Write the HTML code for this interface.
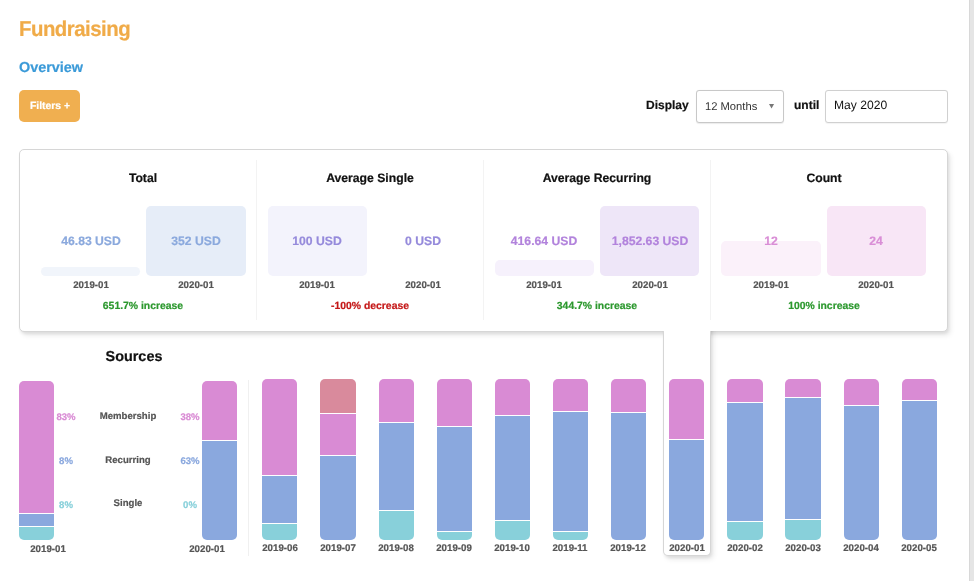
<!DOCTYPE html>
<html><head><meta charset="utf-8"><style>
html,body{margin:0;padding:0;background:#fff;width:974px;height:581px;overflow:hidden;position:relative;}
.t{will-change:transform;text-rendering:geometricPrecision;}
.t{position:absolute;white-space:nowrap;font-family:"Liberation Sans", sans-serif;}
.b{-webkit-text-stroke:0.2px currentColor;}
</style></head><body>
<div id="t0" class="t b" style="left:18.60px;top:20.13px;font-size:20.4px;line-height:20.4px;font-weight:bold;color:#F0AB48;letter-spacing:-0.5px;transform:scaleY(1.055);transform-origin:0 17.8px;">Fundraising</div>
<div id="t1" class="t b" style="left:18.70px;top:61.21px;font-size:14.4px;line-height:14.4px;font-weight:bold;color:#3B9AD8;">Overview</div>
<div style="position:absolute;left:19px;top:90px;width:61px;height:32px;background:#F0AF50;border-radius:5px;"></div>
<div id="t2" class="t b" style="left:-150.50px;width:400px;text-align:center;top:101.80px;font-size:10.4px;line-height:10.4px;font-weight:bold;color:#fff;">Filters +</div>
<div id="t3" class="t b" style="left:646.40px;top:98.94px;font-size:12px;line-height:12px;font-weight:bold;color:#111;">Display</div>
<div style="position:absolute;left:696px;top:90px;width:88px;height:32.6px;box-sizing:border-box;border:1px solid #c8c8c8;border-radius:3px;background:#fff;box-shadow:0 0.5px 1px rgba(0,0,0,0.08);"></div>
<div id="t4" class="t" style="left:704.60px;top:102.02px;font-size:11.2px;line-height:11.2px;font-weight:normal;color:#333;">12 Months</div>
<svg style="position:absolute;left:768px;top:103px" width="8" height="7"><path d="M1 1 L6.1 1 L3.55 5.6 Z" fill="#777"/></svg>
<div id="t5" class="t b" style="left:793.80px;top:98.84px;font-size:12px;line-height:12px;font-weight:bold;color:#111;">until</div>
<div style="position:absolute;left:825px;top:90px;width:123px;height:32.6px;box-sizing:border-box;border:1px solid #d0d0d0;border-radius:3px;background:#fff;box-shadow:0 0.5px 1px rgba(0,0,0,0.05);"></div>
<div id="t6" class="t" style="left:834.20px;top:99.16px;font-size:12.1px;line-height:12.1px;font-weight:normal;color:#111;">May 2020</div>
<div style="position:absolute;left:969px;top:0px;width:5px;height:581px;background:#e5e5e5;border-left:1.5px solid #d8d8d8;box-sizing:border-box;"></div>
<div style="position:absolute;left:19px;top:148.6px;width:929px;height:183.2px;box-sizing:border-box;border:1px solid #d6d6d6;border-radius:5px;background:#fff;box-shadow:1px 2px 3px rgba(0,0,0,0.08), 3px 4px 5px rgba(0,0,0,0.07);"></div>
<div style="position:absolute;left:663px;top:320px;width:48px;height:236.4px;box-sizing:border-box;border:1px solid #d6d6d6;border-top:none;border-radius:0 0 5px 5px;background:#fff;box-shadow:1px 2px 3px rgba(0,0,0,0.08), 3px 4px 5px rgba(0,0,0,0.07);clip-path:inset(11px -20px -20px -20px);"></div>
<div style="position:absolute;left:664px;top:325px;width:46px;height:8px;background:#fff;"></div>
<div id="t7" class="t b" style="left:-56.60px;width:400px;text-align:center;top:171.77px;font-size:12.2px;line-height:12.2px;font-weight:bold;color:#111;">Total</div>
<div style="position:absolute;left:41.0px;top:266.6872159090909px;width:99.4px;height:9.31278409090909px;background:#F1F5FB;border-radius:5px;"></div>
<div id="t8" class="t b" style="left:-109.30px;width:400px;text-align:center;top:234.87px;font-size:12.2px;line-height:12.2px;font-weight:bold;color:#8BA9DD;">46.83 USD</div>
<div id="t9" class="t b" style="left:-109.30px;width:400px;text-align:center;top:281.29px;font-size:9.7px;line-height:9.7px;font-weight:bold;color:#555;letter-spacing:0px;">2019-01</div>
<div style="position:absolute;left:146.4px;top:206.0px;width:99.4px;height:70.0px;background:#E6EDF8;border-radius:5px;"></div>
<div id="t10" class="t b" style="left:-3.90px;width:400px;text-align:center;top:234.87px;font-size:12.2px;line-height:12.2px;font-weight:bold;color:#8BA9DD;">352 USD</div>
<div id="t11" class="t b" style="left:-3.90px;width:400px;text-align:center;top:281.29px;font-size:9.7px;line-height:9.7px;font-weight:bold;color:#555;letter-spacing:0px;">2020-01</div>
<div id="t12" class="t b" style="left:-56.60px;width:400px;text-align:center;top:302.30px;font-size:10.4px;line-height:10.4px;font-weight:bold;color:#2C982E;">651.7% increase</div>
<div style="position:absolute;left:256px;top:160px;width:1px;height:160px;background:#f3f3f3;"></div>
<div id="t13" class="t b" style="left:170.15px;width:400px;text-align:center;top:171.77px;font-size:12.2px;line-height:12.2px;font-weight:bold;color:#111;">Average Single</div>
<div style="position:absolute;left:267.75px;top:206.0px;width:99.4px;height:70.0px;background:#F3F3FC;border-radius:5px;"></div>
<div id="t14" class="t b" style="left:117.45px;width:400px;text-align:center;top:234.87px;font-size:12.2px;line-height:12.2px;font-weight:bold;color:#958ADB;">100 USD</div>
<div id="t15" class="t b" style="left:117.45px;width:400px;text-align:center;top:281.29px;font-size:9.7px;line-height:9.7px;font-weight:bold;color:#555;letter-spacing:0px;">2019-01</div>
<div id="t16" class="t b" style="left:222.85px;width:400px;text-align:center;top:234.87px;font-size:12.2px;line-height:12.2px;font-weight:bold;color:#958ADB;">0 USD</div>
<div id="t17" class="t b" style="left:222.85px;width:400px;text-align:center;top:281.29px;font-size:9.7px;line-height:9.7px;font-weight:bold;color:#555;letter-spacing:0px;">2020-01</div>
<div id="t18" class="t b" style="left:170.15px;width:400px;text-align:center;top:302.30px;font-size:10.4px;line-height:10.4px;font-weight:bold;color:#C41818;">-100% decrease</div>
<div style="position:absolute;left:483px;top:160px;width:1px;height:160px;background:#f3f3f3;"></div>
<div id="t19" class="t b" style="left:396.90px;width:400px;text-align:center;top:171.77px;font-size:12.2px;line-height:12.2px;font-weight:bold;color:#111;">Average Recurring</div>
<div style="position:absolute;left:494.5px;top:260.2576229468377px;width:99.4px;height:15.74237705316226px;background:#F6F1FC;border-radius:5px;"></div>
<div id="t20" class="t b" style="left:344.20px;width:400px;text-align:center;top:234.87px;font-size:12.2px;line-height:12.2px;font-weight:bold;color:#B283DC;">416.64 USD</div>
<div id="t21" class="t b" style="left:344.20px;width:400px;text-align:center;top:281.29px;font-size:9.7px;line-height:9.7px;font-weight:bold;color:#555;letter-spacing:0px;">2019-01</div>
<div style="position:absolute;left:599.9px;top:206.0px;width:99.4px;height:70.0px;background:#EEE6F8;border-radius:5px;"></div>
<div id="t22" class="t b" style="left:449.60px;width:400px;text-align:center;top:234.87px;font-size:12.2px;line-height:12.2px;font-weight:bold;color:#B283DC;">1,852.63 USD</div>
<div id="t23" class="t b" style="left:449.60px;width:400px;text-align:center;top:281.29px;font-size:9.7px;line-height:9.7px;font-weight:bold;color:#555;letter-spacing:0px;">2020-01</div>
<div id="t24" class="t b" style="left:396.90px;width:400px;text-align:center;top:302.30px;font-size:10.4px;line-height:10.4px;font-weight:bold;color:#2C982E;">344.7% increase</div>
<div style="position:absolute;left:710px;top:160px;width:1px;height:160px;background:#f3f3f3;"></div>
<div id="t25" class="t b" style="left:623.65px;width:400px;text-align:center;top:171.77px;font-size:12.2px;line-height:12.2px;font-weight:bold;color:#111;">Count</div>
<div style="position:absolute;left:721.25px;top:241.0px;width:99.4px;height:35.0px;background:#FBF1FA;border-radius:5px;"></div>
<div id="t26" class="t b" style="left:570.95px;width:400px;text-align:center;top:234.87px;font-size:12.2px;line-height:12.2px;font-weight:bold;color:#D98ED6;">12</div>
<div id="t27" class="t b" style="left:570.95px;width:400px;text-align:center;top:281.29px;font-size:9.7px;line-height:9.7px;font-weight:bold;color:#555;letter-spacing:0px;">2019-01</div>
<div style="position:absolute;left:826.65px;top:206.0px;width:99.4px;height:70.0px;background:#F8E6F6;border-radius:5px;"></div>
<div id="t28" class="t b" style="left:676.35px;width:400px;text-align:center;top:234.87px;font-size:12.2px;line-height:12.2px;font-weight:bold;color:#D98ED6;">24</div>
<div id="t29" class="t b" style="left:676.35px;width:400px;text-align:center;top:281.29px;font-size:9.7px;line-height:9.7px;font-weight:bold;color:#555;letter-spacing:0px;">2020-01</div>
<div id="t30" class="t b" style="left:623.65px;width:400px;text-align:center;top:302.30px;font-size:10.4px;line-height:10.4px;font-weight:bold;color:#2C982E;">100% increase</div>
<div id="t31" class="t b" style="left:-66.30px;width:400px;text-align:center;top:349.61px;font-size:14.4px;line-height:14.4px;font-weight:bold;color:#111;">Sources</div>
<div style="position:absolute;left:18.9px;top:380.7px;width:35px;height:159.8px;border-radius:5px;overflow:hidden;display:flex;flex-direction:column;"><div style="height:133.17px;background:#D98BD4;box-sizing:border-box;flex:none;border-bottom:1px solid #fff;"></div><div style="height:13.32px;background:#8AA8DE;box-sizing:border-box;flex:none;border-bottom:1px solid #fff;"></div><div style="height:13.32px;background:#88D0DA;box-sizing:border-box;flex:none;"></div></div>
<div id="t32" class="t b" style="left:-151.60px;width:400px;text-align:center;top:545.29px;font-size:9.7px;line-height:9.7px;font-weight:bold;color:#555;letter-spacing:0px;">2019-01</div>
<div style="position:absolute;left:202px;top:380.7px;width:34.8px;height:159.8px;border-radius:5px;overflow:hidden;display:flex;flex-direction:column;"><div style="height:59.93px;background:#D98BD4;box-sizing:border-box;flex:none;border-bottom:1px solid #fff;"></div><div style="height:99.88px;background:#8AA8DE;box-sizing:border-box;flex:none;"></div></div>
<div id="t33" class="t b" style="left:7.20px;width:400px;text-align:center;top:545.29px;font-size:9.7px;line-height:9.7px;font-weight:bold;color:#555;letter-spacing:0px;">2020-01</div>
<div id="t34" class="t b" style="left:-72.00px;width:400px;text-align:center;top:411.97px;font-size:9.6px;line-height:9.6px;font-weight:bold;color:#555;">Membership</div>
<div id="t35" class="t b" style="left:-72.00px;width:400px;text-align:center;top:455.97px;font-size:9.6px;line-height:9.6px;font-weight:bold;color:#555;">Recurring</div>
<div id="t36" class="t b" style="left:-72.00px;width:400px;text-align:center;top:498.87px;font-size:9.6px;line-height:9.6px;font-weight:bold;color:#555;">Single</div>
<div id="t37" class="t b" style="left:-133.70px;width:400px;text-align:center;top:412.57px;font-size:9.6px;line-height:9.6px;font-weight:bold;color:#D98BD4;">83%</div>
<div id="t38" class="t b" style="left:-133.70px;width:400px;text-align:center;top:456.67px;font-size:9.6px;line-height:9.6px;font-weight:bold;color:#8AA8DE;">8%</div>
<div id="t39" class="t b" style="left:-133.70px;width:400px;text-align:center;top:500.57px;font-size:9.6px;line-height:9.6px;font-weight:bold;color:#88D0DA;">8%</div>
<div id="t40" class="t b" style="left:-10.30px;width:400px;text-align:center;top:412.57px;font-size:9.6px;line-height:9.6px;font-weight:bold;color:#D98BD4;">38%</div>
<div id="t41" class="t b" style="left:-10.30px;width:400px;text-align:center;top:456.77px;font-size:9.6px;line-height:9.6px;font-weight:bold;color:#8AA8DE;">63%</div>
<div id="t42" class="t b" style="left:-10.30px;width:400px;text-align:center;top:500.77px;font-size:9.6px;line-height:9.6px;font-weight:bold;color:#88D0DA;">0%</div>
<div style="position:absolute;left:247.5px;top:380px;width:1px;height:176px;background:#f0f0f0;"></div>
<div style="position:absolute;left:262.3px;top:379px;width:35.2px;height:160.70000000000005px;border-radius:5px;overflow:hidden;display:flex;flex-direction:column;"><div style="height:95.60px;background:#D98BD4;box-sizing:border-box;flex:none;"></div><div style="height:48.60px;background:#8AA8DE;box-sizing:border-box;flex:none;border-top:1px solid #fff;"></div><div style="height:16.50px;background:#88D0DA;box-sizing:border-box;flex:none;border-top:1px solid #fff;"></div></div>
<div id="t43" class="t b" style="left:79.60px;width:400px;text-align:center;top:544.49px;font-size:9.7px;line-height:9.7px;font-weight:bold;color:#555;letter-spacing:0px;">2019-06</div>
<div style="position:absolute;left:320.43px;top:379px;width:35.2px;height:160.70000000000005px;border-radius:5px;overflow:hidden;display:flex;flex-direction:column;"><div style="height:34.00px;background:#D98A9C;box-sizing:border-box;flex:none;"></div><div style="height:42.20px;background:#D98BD4;box-sizing:border-box;flex:none;border-top:1px solid #fff;"></div><div style="height:84.50px;background:#8AA8DE;box-sizing:border-box;flex:none;border-top:1px solid #fff;"></div></div>
<div id="t44" class="t b" style="left:137.73px;width:400px;text-align:center;top:544.49px;font-size:9.7px;line-height:9.7px;font-weight:bold;color:#555;letter-spacing:0px;">2019-07</div>
<div style="position:absolute;left:378.56px;top:379px;width:35.2px;height:160.70000000000005px;border-radius:5px;overflow:hidden;display:flex;flex-direction:column;"><div style="height:43.00px;background:#D98BD4;box-sizing:border-box;flex:none;"></div><div style="height:87.80px;background:#8AA8DE;box-sizing:border-box;flex:none;border-top:1px solid #fff;"></div><div style="height:29.90px;background:#88D0DA;box-sizing:border-box;flex:none;border-top:1px solid #fff;"></div></div>
<div id="t45" class="t b" style="left:195.86px;width:400px;text-align:center;top:544.49px;font-size:9.7px;line-height:9.7px;font-weight:bold;color:#555;letter-spacing:0px;">2019-08</div>
<div style="position:absolute;left:436.69px;top:379px;width:35.2px;height:160.70000000000005px;border-radius:5px;overflow:hidden;display:flex;flex-direction:column;"><div style="height:47.40px;background:#D98BD4;box-sizing:border-box;flex:none;"></div><div style="height:105.00px;background:#8AA8DE;box-sizing:border-box;flex:none;border-top:1px solid #fff;"></div><div style="height:8.30px;background:#88D0DA;box-sizing:border-box;flex:none;border-top:1px solid #fff;"></div></div>
<div id="t46" class="t b" style="left:253.99px;width:400px;text-align:center;top:544.49px;font-size:9.7px;line-height:9.7px;font-weight:bold;color:#555;letter-spacing:0px;">2019-09</div>
<div style="position:absolute;left:494.82px;top:379px;width:35.2px;height:160.70000000000005px;border-radius:5px;overflow:hidden;display:flex;flex-direction:column;"><div style="height:36.10px;background:#D98BD4;box-sizing:border-box;flex:none;"></div><div style="height:105.00px;background:#8AA8DE;box-sizing:border-box;flex:none;border-top:1px solid #fff;"></div><div style="height:19.60px;background:#88D0DA;box-sizing:border-box;flex:none;border-top:1px solid #fff;"></div></div>
<div id="t47" class="t b" style="left:312.12px;width:400px;text-align:center;top:544.49px;font-size:9.7px;line-height:9.7px;font-weight:bold;color:#555;letter-spacing:0px;">2019-10</div>
<div style="position:absolute;left:552.95px;top:379px;width:35.2px;height:160.70000000000005px;border-radius:5px;overflow:hidden;display:flex;flex-direction:column;"><div style="height:31.80px;background:#D98BD4;box-sizing:border-box;flex:none;"></div><div style="height:120.60px;background:#8AA8DE;box-sizing:border-box;flex:none;border-top:1px solid #fff;"></div><div style="height:8.30px;background:#88D0DA;box-sizing:border-box;flex:none;border-top:1px solid #fff;"></div></div>
<div id="t48" class="t b" style="left:370.25px;width:400px;text-align:center;top:544.49px;font-size:9.7px;line-height:9.7px;font-weight:bold;color:#555;letter-spacing:0px;">2019-11</div>
<div style="position:absolute;left:611.08px;top:379px;width:35.2px;height:160.70000000000005px;border-radius:5px;overflow:hidden;display:flex;flex-direction:column;"><div style="height:32.80px;background:#D98BD4;box-sizing:border-box;flex:none;"></div><div style="height:127.90px;background:#8AA8DE;box-sizing:border-box;flex:none;border-top:1px solid #fff;"></div></div>
<div id="t49" class="t b" style="left:428.38px;width:400px;text-align:center;top:544.49px;font-size:9.7px;line-height:9.7px;font-weight:bold;color:#555;letter-spacing:0px;">2019-12</div>
<div style="position:absolute;left:669.21px;top:379px;width:35.2px;height:160.70000000000005px;border-radius:5px;overflow:hidden;display:flex;flex-direction:column;"><div style="height:59.60px;background:#D98BD4;box-sizing:border-box;flex:none;"></div><div style="height:101.10px;background:#8AA8DE;box-sizing:border-box;flex:none;border-top:1px solid #fff;"></div></div>
<div id="t50" class="t b" style="left:486.51px;width:400px;text-align:center;top:544.49px;font-size:9.7px;line-height:9.7px;font-weight:bold;color:#555;letter-spacing:0px;">2020-01</div>
<div style="position:absolute;left:727.34px;top:379px;width:35.2px;height:160.70000000000005px;border-radius:5px;overflow:hidden;display:flex;flex-direction:column;"><div style="height:22.70px;background:#D98BD4;box-sizing:border-box;flex:none;"></div><div style="height:119.50px;background:#8AA8DE;box-sizing:border-box;flex:none;border-top:1px solid #fff;"></div><div style="height:18.50px;background:#88D0DA;box-sizing:border-box;flex:none;border-top:1px solid #fff;"></div></div>
<div id="t51" class="t b" style="left:544.64px;width:400px;text-align:center;top:544.49px;font-size:9.7px;line-height:9.7px;font-weight:bold;color:#555;letter-spacing:0px;">2020-02</div>
<div style="position:absolute;left:785.47px;top:379px;width:35.2px;height:160.70000000000005px;border-radius:5px;overflow:hidden;display:flex;flex-direction:column;"><div style="height:18.10px;background:#D98BD4;box-sizing:border-box;flex:none;"></div><div style="height:121.80px;background:#8AA8DE;box-sizing:border-box;flex:none;border-top:1px solid #fff;"></div><div style="height:20.80px;background:#88D0DA;box-sizing:border-box;flex:none;border-top:1px solid #fff;"></div></div>
<div id="t52" class="t b" style="left:602.77px;width:400px;text-align:center;top:544.49px;font-size:9.7px;line-height:9.7px;font-weight:bold;color:#555;letter-spacing:0px;">2020-03</div>
<div style="position:absolute;left:843.6px;top:379px;width:35.2px;height:160.70000000000005px;border-radius:5px;overflow:hidden;display:flex;flex-direction:column;"><div style="height:26.30px;background:#D98BD4;box-sizing:border-box;flex:none;"></div><div style="height:134.40px;background:#8AA8DE;box-sizing:border-box;flex:none;border-top:1px solid #fff;"></div></div>
<div id="t53" class="t b" style="left:660.90px;width:400px;text-align:center;top:544.49px;font-size:9.7px;line-height:9.7px;font-weight:bold;color:#555;letter-spacing:0px;">2020-04</div>
<div style="position:absolute;left:901.73px;top:379px;width:35.2px;height:160.70000000000005px;border-radius:5px;overflow:hidden;display:flex;flex-direction:column;"><div style="height:21.40px;background:#D98BD4;box-sizing:border-box;flex:none;"></div><div style="height:139.30px;background:#8AA8DE;box-sizing:border-box;flex:none;border-top:1px solid #fff;"></div></div>
<div id="t54" class="t b" style="left:719.03px;width:400px;text-align:center;top:544.49px;font-size:9.7px;line-height:9.7px;font-weight:bold;color:#555;letter-spacing:0px;">2020-05</div>
</body></html>
